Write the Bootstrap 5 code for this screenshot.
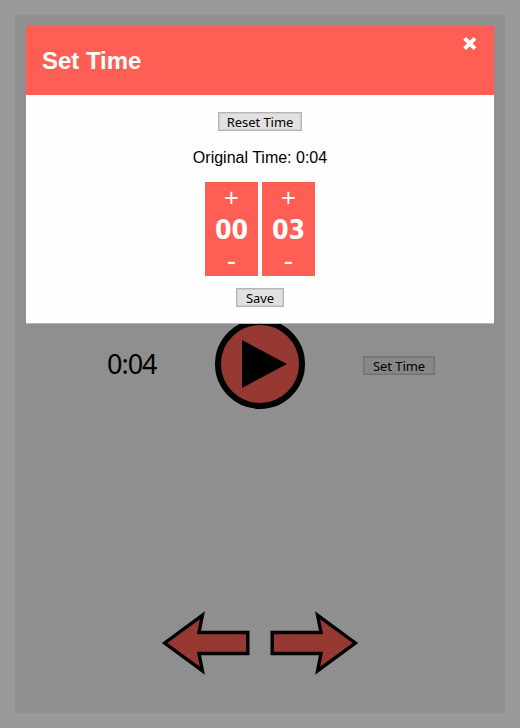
<!DOCTYPE html>
<html lang="en">
<head>
<meta charset="utf-8">
<meta name="viewport" content="width=device-width, initial-scale=1">
<title>Set Time</title>
<link href="https://cdn.jsdelivr.net/npm/bootstrap@5.3.0/dist/css/bootstrap.min.css" rel="stylesheet">
<style>
body{background:#999;padding:15px;height:728px;overflow:hidden;color:#000;font-family:"Liberation Sans",Arial,sans-serif}
.panel{background:#8f8f8f;height:698px;border-radius:2px;padding-top:304px}
.controls{height:90px}
.clock{width:50px;margin-left:92px;font:27px/40px "Noto Sans",sans-serif;letter-spacing:-1px;white-space:nowrap}
.play{margin-left:58px}
.small-btn{height:19px;padding:0;border:1px solid #b3b3b3;box-shadow:inset 0 0 0 1px #cfcfcf;border-radius:0;background:#e1e1e1;color:#000;font:13px/18px "Noto Sans",sans-serif;letter-spacing:-.05px;white-space:nowrap;display:block}
.w-reset{width:84px}
.w-save{width:48px;margin-top:12px}
.w-set{width:72px;margin-left:58px;margin-top:3px;background:#878787;border-color:#737373;box-shadow:inset 0 0 0 1px #7d7d7d}
.arrows{margin-top:199px;gap:18px;padding-right:2px}
.dialog-box{left:26px;top:26px;width:468px;height:298px;background:#fefefe;border-bottom:1px solid #b8b8b8}
.dialog-head{height:69px;background:#ff5e54;color:#fff;padding:0 16px}
.dialog-head h2{font-size:24px;line-height:28px;font-weight:700;letter-spacing:-.03px}
.dialog-content{padding-top:17px}
.close-x{right:16px;top:10px;width:16px;height:16px;line-height:0;background:none}
.original{font-size:16px;line-height:20px;margin:17px 0 14px}
.spinner-col{width:53px;height:94px;background:#ff5e54;color:#fff}
.step{border:0;background:none;color:#fff;padding:0;font:20px/30px "DejaVu Sans",sans-serif;height:30px}
.step-down{font-size:26px;line-height:27px}
.digits{font:bold 26.5px/36px "DejaVu Sans Condensed","DejaVu Sans",sans-serif;font-stretch:condensed;height:35px}
</style>
<script src="https://cdn.jsdelivr.net/npm/bootstrap@5.3.0/dist/js/bootstrap.bundle.min.js"></script>
</head>
<body>
<main class="panel">
  <div class="controls d-flex align-items-center">
    <div class="clock">0:04</div>
    <svg class="play flex-shrink-0" width="90" height="90" viewBox="0 0 90 90"><circle cx="45" cy="45" r="42" fill="#973933" stroke="#000" stroke-width="6"/><path d="M27 21v48l45-24z"/></svg>
    <button class="small-btn w-set">Set Time</button>
  </div>
  <div class="arrows d-flex justify-content-center">
    <svg width="90" height="70" viewBox="160 608 90 70"><path d="M164.6 643 202.4 615.3 199 632.5H247.8V653.5H199L202.4 670.7Z" fill="#973933" stroke="#000" stroke-width="3.4"/></svg>
    <svg width="90" height="70" viewBox="268 608 90 70"><path d="M355.4 643 317.6 615.3 321 632.5H272.2V653.5H321L317.6 670.7Z" fill="#973933" stroke="#000" stroke-width="3.4"/></svg>
  </div>
</main>
<section class="dialog-box position-absolute" role="dialog" aria-label="Set Time">
  <header class="dialog-head d-flex align-items-center position-relative">
    <h2 class="mb-0">Set Time</h2>
    <button class="close-x position-absolute border-0 p-0" aria-label="Close"><svg width="16" height="16" viewBox="0 0 16 16"><path d="M2.7 2.4 13 12.6M13 2.4 2.7 12.6" stroke="#fff" stroke-width="4"/></svg></button>
  </header>
  <div class="dialog-content d-flex flex-column align-items-center">
    <button class="small-btn w-reset">Reset Time</button>
    <p class="original">Original Time: 0:04</p>
    <div class="d-flex gap-1">
      <div class="spinner-col d-flex flex-column text-center"><button class="step">+</button><div class="digits">00</div><button class="step step-down">-</button></div>
      <div class="spinner-col d-flex flex-column text-center"><button class="step">+</button><div class="digits">03</div><button class="step step-down">-</button></div>
    </div>
    <button class="small-btn w-save">Save</button>
  </div>
</section>
</body>
</html>
